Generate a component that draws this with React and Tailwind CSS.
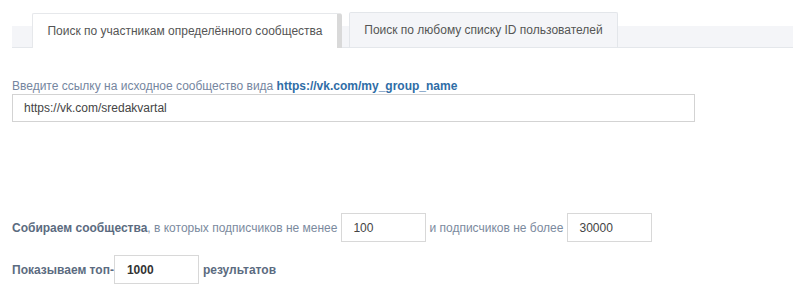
export default function App() {
  return (
    <div className="w-[800px] h-[293px] bg-white font-['Liberation_Sans',Arial,sans-serif] text-[12px] overflow-hidden">
      <div className="pl-[12px] pr-[7px] pt-[12px]">
        <div className="flex items-end h-[36px] pl-[20px] gap-[7px] border-b border-[#e4e7eb] bg-[linear-gradient(to_bottom,transparent_14px,#f4f5f8_14px)]">
          <div className="w-[310px] h-[35px] mb-[-1px] bg-white border border-[#e6e8eb] border-b-0 border-r-[5px] border-r-[#d9d9d9] rounded-tl-[2px] rounded-tr-[3px] flex items-center justify-center text-[#555] leading-none">
            Поиск по участникам определённого сообщества
          </div>
          <div className="w-[269px] h-[36px] mb-[-1px] bg-[#f4f5f8] border border-[#e3e6ea] border-b-[#e4e7eb] rounded-t-[2px] flex items-center justify-center text-[#555] leading-none">
            Поиск по любому списку ID пользователей
          </div>
        </div>
      </div>
      <div className="pl-[12px]">
        <div className="mt-[31px] leading-[15px] text-[#7586a0]">
          Введите ссылку на исходное сообщество вида{" "}
          <span className="font-bold text-[#2f6da6]">https://vk.com/my_group_name</span>
        </div>
        <div className="w-[683px] h-[28px] border border-[#d3d3d3] flex items-center pl-[11px] text-[#444]">
          https://vk.com/sredakvartal
        </div>
        <div className="mt-[91px] h-[29px] flex items-center text-[#7b8a9e]">
          <span className="font-bold text-[#5b6b80]">Собираем сообщества</span>
          <span>, в которых подписчиков не менее</span>
          <div className="ml-[4px] mr-[3px] w-[85px] h-[29px] border border-[#d8d8d8] flex items-center pl-[11px] text-[#444]">100</div>
          <span>и подписчиков не более</span>
          <div className="ml-[4px] w-[85px] h-[29px] border border-[#d8d8d8] flex items-center pl-[11px] text-[#444]">30000</div>
        </div>
        <div className="mt-[13px] h-[29px] flex items-center font-bold text-[#5b6b80]">
          <span>Показываем топ-</span>
          <div className="mr-[4px] w-[85px] h-[29px] border border-[#d8d8d8] flex items-center pl-[12px] text-[#333] font-bold">1000</div>
          <span>результатов</span>
        </div>
      </div>
    </div>
  );
}
